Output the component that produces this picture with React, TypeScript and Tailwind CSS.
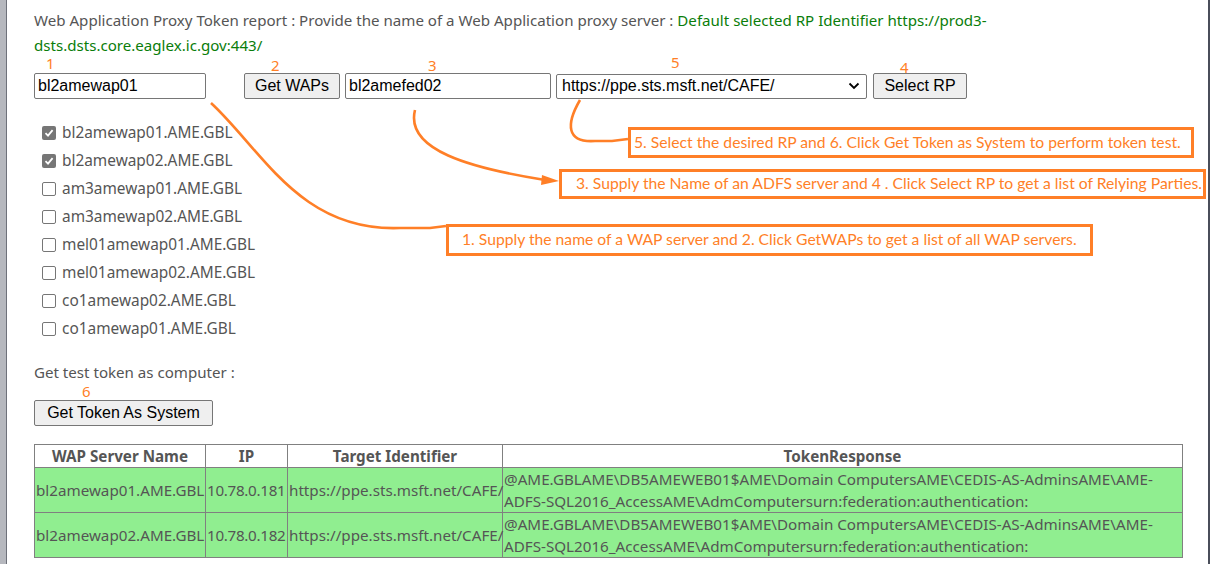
import React from "react";

const servers = [
  { name: "bl2amewap01.AME.GBL", checked: true },
  { name: "bl2amewap02.AME.GBL", checked: true },
  { name: "am3amewap01.AME.GBL", checked: false },
  { name: "am3amewap02.AME.GBL", checked: false },
  { name: "mel01amewap01.AME.GBL", checked: false },
  { name: "mel01amewap02.AME.GBL", checked: false },
  { name: "co1amewap02.AME.GBL", checked: false },
  { name: "co1amewap01.AME.GBL", checked: false },
];

const rows = [
  { name: "bl2amewap01.AME.GBL", ip: "10.78.0.181" },
  { name: "bl2amewap02.AME.GBL", ip: "10.78.0.182" },
];

function Box({ checked }: { checked: boolean }) {
  return checked ? (
    <span className="flex h-[14px] w-[14px] items-center justify-center rounded-[2px] bg-[#767676]">
      <svg width="10" height="10" viewBox="0 0 10 10">
        <path d="M1.5 5.2 L4 7.6 L8.6 2.2" stroke="white" strokeWidth="1.8" fill="none" />
      </svg>
    </span>
  ) : (
    <span className="h-[14px] w-[14px] rounded-[2px] border border-[#767676] bg-white" />
  );
}

export default function App() {
  const seg = { fontFamily: '"Noto Sans", "Open Sans", sans-serif' };
  const arial = { fontFamily: '"Liberation Sans", Arial, sans-serif' };
  const note = { fontFamily: 'Lato, "Noto Sans", sans-serif' };
  return (
    <div className="relative h-[564px] w-[1210px] overflow-hidden bg-white">
      <div className="flex h-full">
        <div className="w-[6px] shrink-0 bg-[#b6b8be]" />
        <div className="w-px shrink-0 bg-[#6e717a]" />
        <div className="flex-1 pl-[27px] pt-[8px]" style={seg}>
          <div className="w-[980px] text-[15.1px] leading-[25px] text-[#555]">
            Web Application Proxy Token report : Provide the name of a Web Application proxy server :{" "}
            <span className="text-[#0a7d0a]">
              Default selected RP Identifier https://prod3-dsts.dsts.core.eaglex.ic.gov:443/
            </span>
          </div>

          <div className="mt-[15px] flex items-center" style={arial}>
            <div className="flex h-[26px] w-[172px] items-center rounded-[2px] border border-[#767676] px-[3px] text-[16px] text-black">
              bl2amewap01
            </div>
            <div className="ml-[38px] flex h-[26px] w-[96px] items-center justify-center rounded-[2px] border border-[#767676] bg-[#efefef] text-[16px] text-black">
              Get WAPs
            </div>
            <div className="ml-[5px] flex h-[26px] w-[206px] items-center rounded-[2px] border border-[#767676] px-[3px] text-[16px] text-black">
              bl2amefed02
            </div>
            <div className="ml-[5px] flex h-[25px] w-[311px] items-center justify-between rounded-[2px] border border-[#767676] pl-[5px] pr-[6px] text-[16px] text-black">
              <span>https://ppe.sts.msft.net/CAFE/</span>
              <svg width="12" height="8" viewBox="0 0 12 8">
                <path d="M1.5 1.5 L6 6 L10.5 1.5" stroke="black" strokeWidth="1.8" fill="none" />
              </svg>
            </div>
            <div className="ml-[6px] flex h-[26px] w-[94px] items-center justify-center rounded-[2px] border border-[#767676] bg-[#efefef] text-[16px] text-black">
              Select RP
            </div>
          </div>

          <div className="mt-[23px] flex flex-col gap-[7px] pl-[8px]">
            {servers.map((s) => (
              <div key={s.name} className="flex h-[21px] items-center gap-[6px] text-[15.4px] text-[#555]">
                <Box checked={s.checked} />
                <span>{s.name}</span>
              </div>
            ))}
          </div>

          <div className="mt-[23px] text-[15.1px] leading-[20px] text-[#555]">Get test token as computer :</div>

          <div className="mt-[18px] flex h-[26px] w-[179px] items-center justify-center rounded-[2px] border border-[#767676] bg-[#efefef] text-[16px] text-black" style={arial}>
            Get Token As System
          </div>

          <table className="mt-[18px] w-[1149px] table-fixed border-collapse text-[15.2px] text-[#555]">
            <colgroup>
              <col className="w-[171px]" />
              <col className="w-[82px]" />
              <col className="w-[215px]" />
              <col />
            </colgroup>
            <thead>
              <tr className="h-[23px]">
                <th className="border border-[#808080] font-bold leading-[20px]">WAP Server Name</th>
                <th className="border border-[#808080] font-bold leading-[20px]">IP</th>
                <th className="border border-[#808080] font-bold leading-[20px]">Target Identifier</th>
                <th className="border border-[#808080] font-bold leading-[20px]">TokenResponse</th>
              </tr>
            </thead>
            <tbody>
              {rows.map((r) => (
                <tr key={r.name} className="h-[45px] bg-[#90ee90]">
                  <td className="whitespace-nowrap border border-[#808080] px-px leading-[22px]">{r.name}</td>
                  <td className="whitespace-nowrap border border-[#808080] px-px leading-[22px] tracking-[-0.3px]">{r.ip}</td>
                  <td className="whitespace-nowrap border border-[#808080] px-px leading-[22px]">https://ppe.sts.msft.net/CAFE/</td>
                  <td className="border border-[#808080] px-px leading-[22px]">
                    @AME.GBLAME\DB5AMEWEB01$AME\Domain ComputersAME\CEDIS-AS-AdminsAME\AME-
                    <br />
                    ADFS-SQL2016_AccessAME\AdmComputersurn:federation:authentication:
                  </td>
                </tr>
              ))}
            </tbody>
          </table>
        </div>
        <div className="w-[2px] shrink-0 bg-[#4a4e5a]" />
      </div>

      {/* step numbers */}
      <div className="pointer-events-none absolute inset-0 text-[15px] text-[#ff7f27]" style={seg}>
        <span className="absolute left-[46px] top-[52px]">1</span>
        <span className="absolute left-[271px] top-[54px]">2</span>
        <span className="absolute left-[428px] top-[54px]">3</span>
        <span className="absolute left-[671px] top-[51px]">5</span>
        <span className="absolute left-[900px] top-[56px]">4</span>
        <span className="absolute left-[82px] top-[380px]">6</span>
      </div>

      {/* connector curves */}
      <svg className="pointer-events-none absolute inset-0" width="1210" height="564" viewBox="0 0 1210 564">
        <g stroke="#ff7f27" strokeWidth="2.6" fill="none">
          <path d="M211 103 C 262 150 300 232 400 228 L 430 228 L 446 226" />
          <path d="M415 110 C 405 150 470 168 545 180" />
          <path d="M580 100 C 566 124 566 143 595 141 L 612 141 L 628 139" />
        </g>
        <path d="M542 175 L 559 181 L 541 185 Z" fill="#ff7f27" />
      </svg>

      {/* annotation boxes */}
      <div className="pointer-events-none absolute inset-0 whitespace-nowrap text-[15.7px] text-[#ff7f27]" style={note}>
        <div className="absolute left-[628px] top-[127px] flex h-[31px] w-[566px] items-center overflow-hidden border-[3px] border-[#ff7f27] pl-[3px] leading-none">
          5. Select the desired RP and 6. Click Get Token as System to perform token test.
        </div>
        <div className="absolute left-[559px] top-[169px] flex h-[30px] w-[647px] items-center overflow-hidden border-[3px] border-[#ff7f27] pl-[14px] leading-none">
          3. Supply the Name of an ADFS server and 4 . Click Select RP to get a list of Relying Parties.
        </div>
        <div className="absolute left-[446px] top-[224px] flex h-[32px] w-[647px] items-center overflow-hidden border-[3px] border-[#ff7f27] pl-[13px] leading-none">
          1. Supply the name of a WAP server and 2. Click GetWAPs to get a list of all WAP servers.
        </div>
      </div>
    </div>
  );
}
